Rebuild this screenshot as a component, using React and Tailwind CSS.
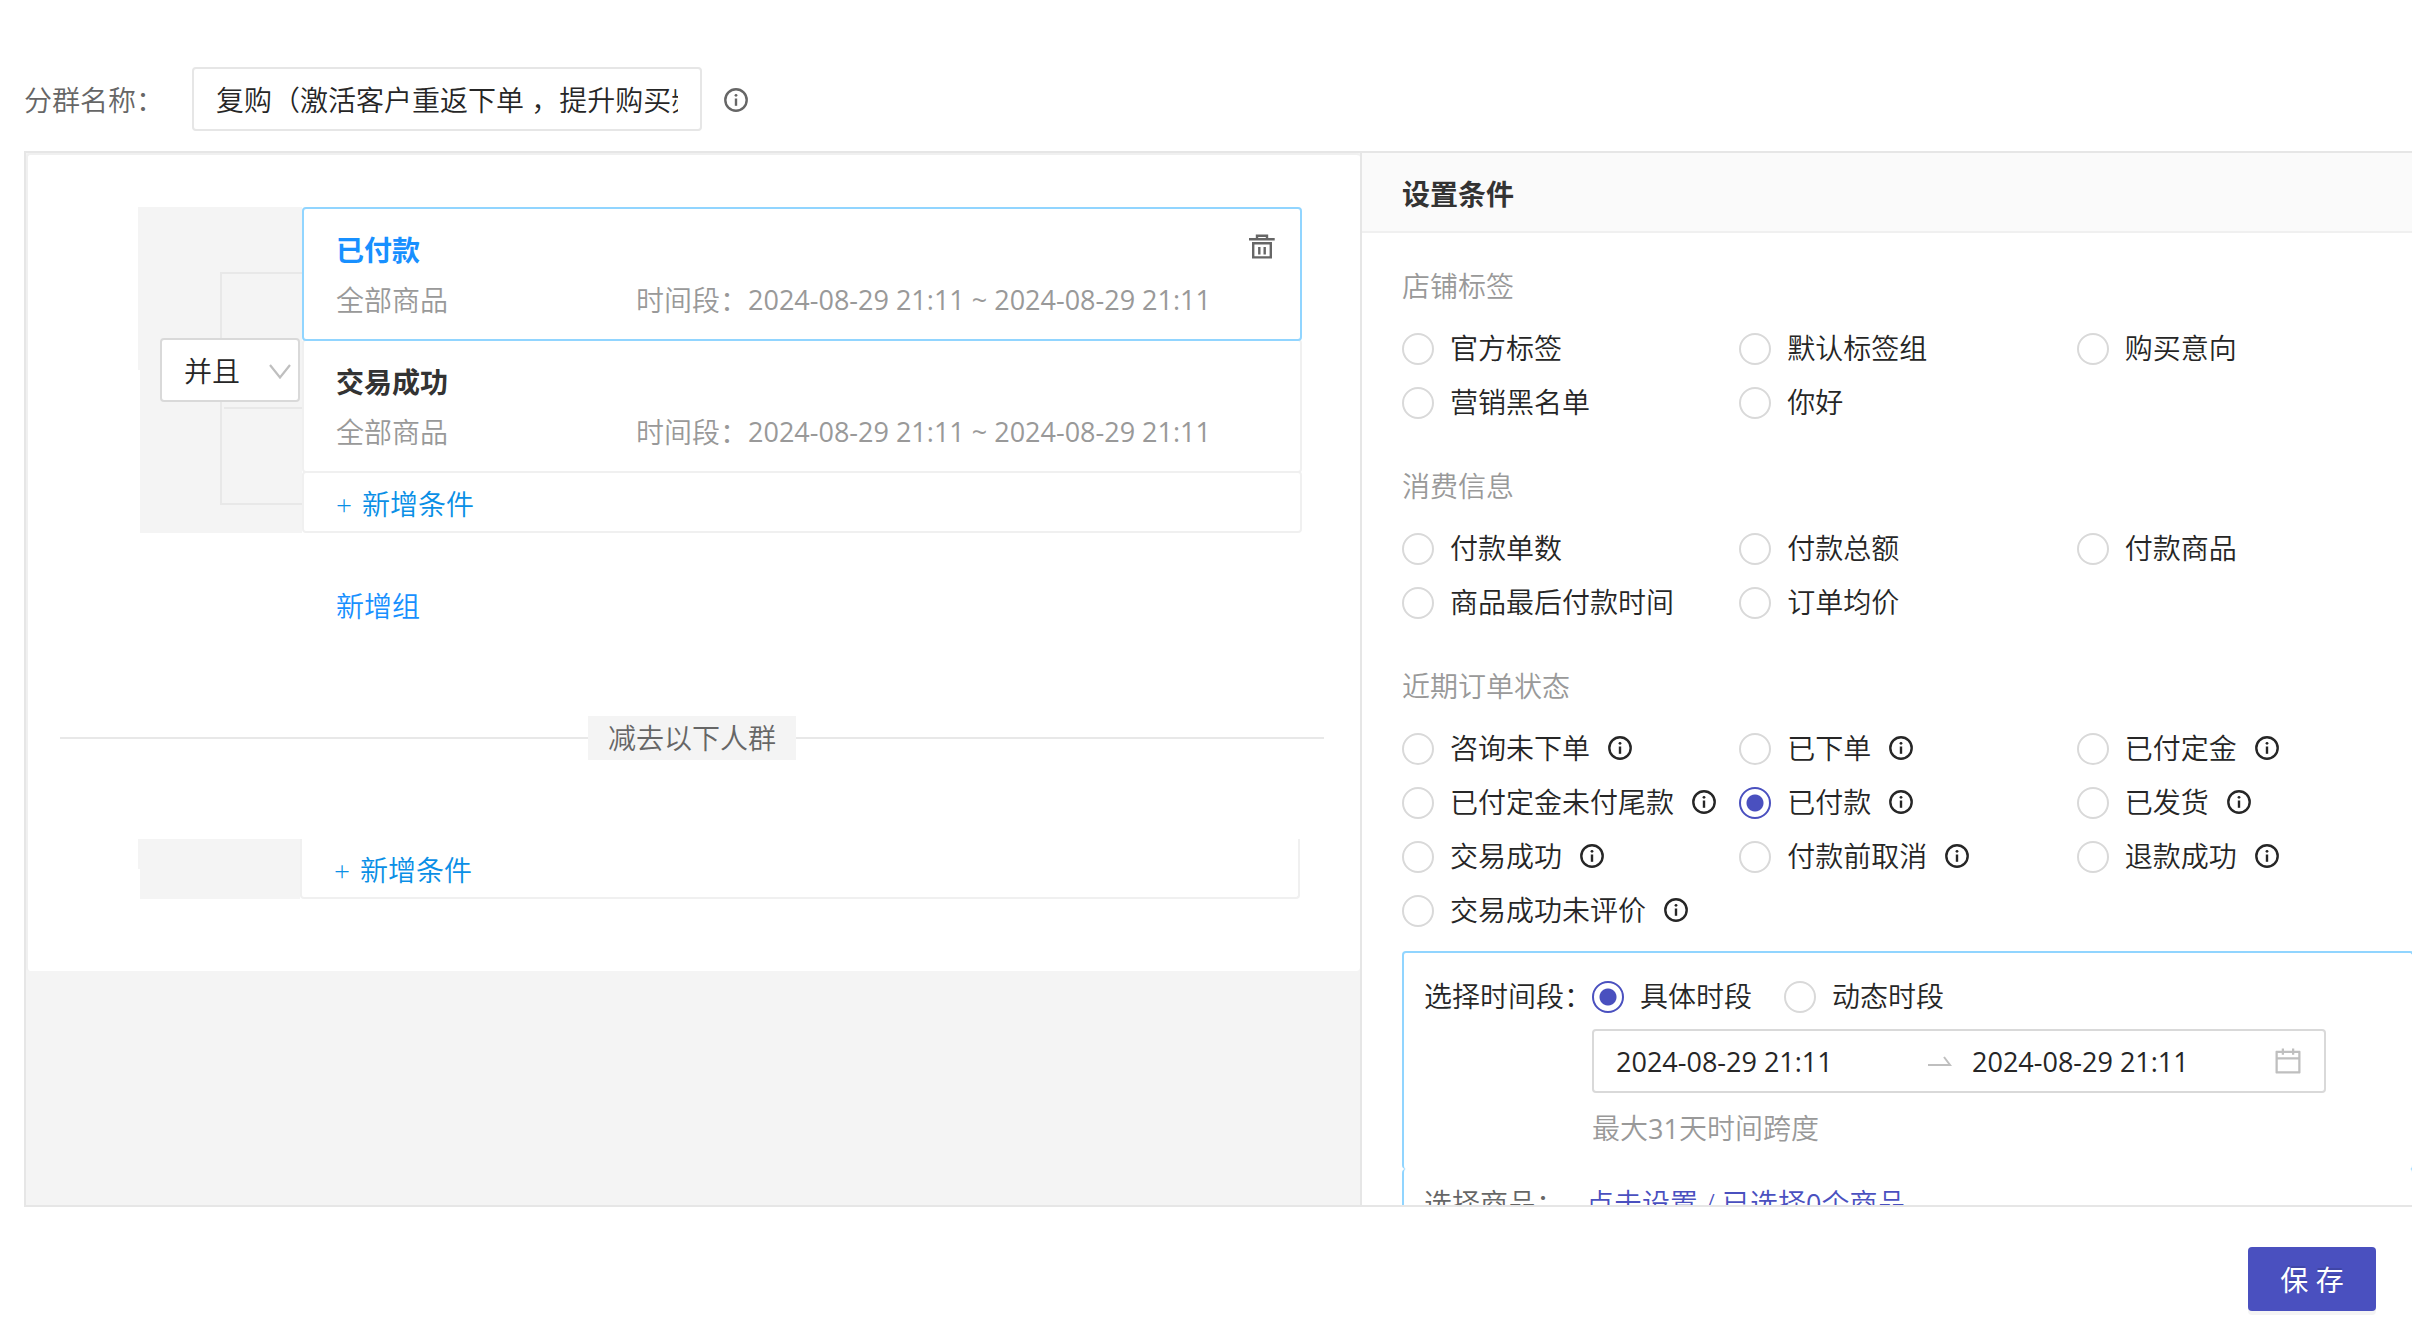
import React, { useState } from "react";

const shopTags = [
  { label: "官方标签" },
  { label: "默认标签组" },
  { label: "购买意向" },
  { label: "营销黑名单" },
  { label: "你好" },
];

const spendInfo = [
  { label: "付款单数" },
  { label: "付款总额" },
  { label: "付款商品" },
  { label: "商品最后付款时间" },
  { label: "订单均价" },
];

const orderStatus = [
  { label: "咨询未下单", tip: true },
  { label: "已下单", tip: true },
  { label: "已付定金", tip: true },
  { label: "已付定金未付尾款", tip: true },
  { label: "已付款", tip: true },
  { label: "已发货", tip: true },
  { label: "交易成功", tip: true },
  { label: "付款前取消", tip: true },
  { label: "退款成功", tip: true },
  { label: "交易成功未评价", tip: true },
];

const InfoIcon = ({ className = "" }) => (
  <svg
    viewBox="0 0 24 24"
    className={`size-6 shrink-0 ${className}`}
    fill="none"
    stroke="currentColor"
    strokeWidth="2.400"
    aria-hidden="true"
  >
    <circle cx="12" cy="12" r="10.700" />
    <path d="M12 10.500v7.300" />
    <circle cx="12" cy="7.300" r="1.400" fill="currentColor" stroke="none" />
  </svg>
);

const TrashIcon = () => (
  <svg
    viewBox="0 0 28 28"
    className="size-7"
    fill="none"
    stroke="currentColor"
    strokeWidth="2.400"
    aria-hidden="true"
  >
    <path d="M1 7.300h25.700M9 7V3.700h10V7M5.200 11.200v14.200h17.600V11.200zM11.300 15v7.500M16.700 15v7.500" />
  </svg>
);

const CalendarIcon = () => (
  <svg
    viewBox="64 64 896 896"
    className="size-7 shrink-0 text-[#bfbfbf]"
    fill="currentColor"
    aria-hidden="true"
  >
    <path d="M880 184H712v-64c0-4.400-3.600-8-8-8h-56c-4.400 0-8 3.600-8 8v64H384v-64c0-4.400-3.600-8-8-8h-56c-4.400 0-8 3.600-8 8v64H144c-17.700 0-32 14.300-32 32v664c0 17.700 14.300 32 32 32h736c17.700 0 32-14.300 32-32V216c0-17.700-14.300-32-32-32zm-40 656H184V460h656v380zM184 392V256h128v48c0 4.400 3.600 8 8 8h56c4.400 0 8-3.600 8-8v-48h256v48c0 4.400 3.600 8 8 8h56c4.400 0 8-3.600 8-8v-48h128v136H184z" />
  </svg>
);

const RadioItem = ({ name, label, tip, checked, onChange }) => (
  <label className="flex h-[54px] cursor-pointer items-center whitespace-nowrap">
    <input
      type="radio"
      name={name}
      checked={checked}
      onChange={onChange}
      className="size-8 shrink-0 cursor-pointer appearance-none rounded-full border-2 border-[#d9d9d9] bg-white checked:border-[#4a50bf] checked:bg-[radial-gradient(circle,#4a50bf_8px,#fff_9px)]"
    />
    <span className="flex items-center pb-0.5 pl-4">
      {label}
      {tip && <InfoIcon className="ml-[18px]" />}
    </span>
  </label>
);

const RadioSection = ({ title, items, value, onChange }) => (
  <section className="mb-[34px]">
    <h3 className="mb-[14px] leading-[44px] text-[#999]">{title}</h3>
    <div className="grid grid-cols-3">
      {items.map((item) => (
        <RadioItem
          key={item.label}
          name="condition"
          label={item.label}
          tip={item.tip}
          checked={value === item.label}
          onChange={() => onChange(item.label)}
        />
      ))}
    </div>
  </section>
);

const AddButton = () => (
  <button type="button" className="flex gap-2.5 text-[#0a8fe6]">
    <span>+</span>
    <span>新增条件</span>
  </button>
);

const ConditionCard = ({ title, range, active }) => (
  <div
    className={`flex items-start justify-between rounded border-2 pt-[19px] pr-6 pb-[17px] pl-8 ${
      active ? "relative border-[#91d5ff]" : "-mt-0.5 border-[#f0f0f0]"
    }`}
  >
    <div className="grow">
      <h3
        className={`leading-[44px] font-bold ${
          active ? "text-[#1890ff]" : "text-[#333]"
        }`}
      >
        {title}
      </h3>
      <div className="mt-1.5 flex leading-[44px] text-[#999]">
        <span className="w-[300px]">全部商品</span>
        <span>时间段：</span>
        <span className="text-[27px] font-normal">{range}</span>
      </div>
    </div>
    {active && (
      <button type="button" aria-label="删除" className="mt-1 text-[#666]">
        <TrashIcon />
      </button>
    )}
  </div>
);

// Grey strip on the left of a group, holds the and/or switch
const Gutter = ({ children, className }) => (
  <div className={`relative flex shrink-0 flex-col ${className}`}>
    <div className="flex-1 bg-[#f4f4f4]" />
    <div className="flex-1 border-l-2 border-white bg-[#f4f4f4]" />
    {children}
  </div>
);

const App = () => {
  const [name, setName] = useState("复购（激活客户重返下单 ，提升购买频次）");
  const [relation, setRelation] = useState("并且");
  const [condition, setCondition] = useState("已付款");
  const [period, setPeriod] = useState("具体时段");
  const [start, setStart] = useState("2024-08-29 21:11");
  const [end, setEnd] = useState("2024-08-29 21:11");

  const range = `${start} ~ ${end}`;

  return (
    <div className="flex h-screen flex-col overflow-hidden bg-white font-['Open_Sans','Noto_Sans_CJK_SC',sans-serif] text-[28px] leading-[44px] font-[350] text-[#262626]">
      {/* Segment name */}
      <header className="flex items-center pt-[67px] pb-5 pl-6">
        <label htmlFor="segment-name" className="w-[168px] pt-0.5 text-[#666]">
          分群名称：
        </label>
        <input
          id="segment-name"
          value={name}
          onChange={(e) => setName(e.target.value)}
          className="h-16 w-[510px] rounded border-2 border-[#e6e6e6] px-[22px] outline-none"
        />
        <InfoIcon className="mt-0.5 ml-[22px] text-[#666]" />
      </header>

      <main className="ml-6 flex min-h-0 flex-1 border-y-2 border-l-2 border-[#e6e6e6]">
        {/* Groups */}
        <div className="min-w-0 flex-1 bg-[#f4f4f4]">
          <div className="rounded border-t-2 border-l-2 border-[#f0f0f0] bg-white pb-[72px]">
            <div className="mt-[52px] mr-[58px] ml-[110px] flex">
              <Gutter className="w-[164px]">
                <div className="absolute top-[65px] right-0 bottom-7 left-[82px] border-2 border-r-0 border-[#e8e8e8]">
                  <div className="mt-[133px] ml-0.5 h-0.5 bg-[#e8e8e8]" />
                </div>
                <div className="absolute top-[131px] left-[22px]">
                  <select
                    aria-label="条件关系"
                    value={relation}
                    onChange={(e) => setRelation(e.target.value)}
                    className="h-16 w-[140px] appearance-none rounded border-2 border-[#d9d9d9] bg-white pt-0.5 pl-[22px] outline-none"
                  >
                    <option>并且</option>
                    <option>或者</option>
                  </select>
                  <svg
                    viewBox="0 0 22 16"
                    className="pointer-events-none absolute top-[25px] right-[9px] h-4 w-[22px] text-[#bfbfbf]"
                    fill="none"
                    stroke="currentColor"
                    strokeWidth="2.200"
                    aria-hidden="true"
                  >
                    <path d="M1 2l10 12.500L21 2" />
                  </svg>
                </div>
              </Gutter>
              <div className="grow">
                <ConditionCard title="已付款" range={range} active />
                <ConditionCard title="交易成功" range={range} />
                <div className="-mt-0.5 rounded border-2 border-[#f0f0f0] pt-[9px] pb-[5px] pl-8">
                  <AddButton />
                </div>
              </div>
            </div>

            <button
              type="button"
              className="mt-[51px] ml-[308px] block text-[#1890ff]"
            >
              新增组
            </button>

            <div className="mr-9 ml-8 mt-[88px] flex items-center">
              <div className="h-0.5 flex-1 bg-[#e8e8e8]" />
              <span className="bg-[#f4f4f4] px-5 text-[#666]">
                减去以下人群
              </span>
              <div className="h-0.5 flex-1 bg-[#e8e8e8]" />
            </div>

            <div className="mt-[79px] mr-[60px] ml-[110px] flex">
              <Gutter className="w-[162px]" />
              <div className="grow rounded-b border-2 border-t-0 border-[#f0f0f0] pt-[9px] pb-[5px] pl-8">
                <AddButton />
              </div>
            </div>
          </div>
        </div>

        {/* Condition settings */}
        <aside className="w-[1052px] shrink-0 overflow-hidden border-l-2 border-[#e6e6e6]">
          <div className="border-b-2 border-[#f0f0f0] bg-[#fafafa] pt-[19px] pb-[15px] pl-10">
            <h2 className="font-bold text-[#333]">设置条件</h2>
          </div>
          <div className="-mr-0.5 pt-[31px] pl-10">
            <RadioSection
              title="店铺标签"
              items={shopTags}
              value={condition}
              onChange={setCondition}
            />
            <RadioSection
              title="消费信息"
              items={spendInfo}
              value={condition}
              onChange={setCondition}
            />
            <RadioSection
              title="近期订单状态"
              items={orderStatus}
              value={condition}
              onChange={setCondition}
            />

            <div className="-mt-[21px] flex rounded border-2 border-b-0 border-[#91d5ff] pt-[17px] pb-[18px] pl-5">
              <span className="w-[168px] shrink-0 pt-1">选择时间段：</span>
              <div>
                <div className="flex gap-8">
                  {["具体时段", "动态时段"].map((item) => (
                    <RadioItem
                      key={item}
                      name="period"
                      label={item}
                      checked={period === item}
                      onChange={() => setPeriod(item)}
                    />
                  ))}
                </div>
                <div className="mt-[5px] flex h-16 w-[734px] items-center rounded border-2 border-[#d9d9d9] px-[22px]">
                  <input
                    aria-label="开始时间"
                    value={start}
                    onChange={(e) => setStart(e.target.value)}
                    className="w-[292px] pt-0.5 text-[27px] font-normal outline-none"
                  />
                  <svg
                    viewBox="0 0 24 12"
                    className="mx-5 h-3 w-6 shrink-0 text-[#bfbfbf]"
                    fill="none"
                    stroke="currentColor"
                    strokeWidth="2"
                    aria-hidden="true"
                  >
                    <path d="M0 10h22L16 2" />
                  </svg>
                  <input
                    aria-label="结束时间"
                    value={end}
                    onChange={(e) => setEnd(e.target.value)}
                    className="min-w-0 flex-1 pt-0.5 text-[27px] font-normal outline-none"
                  />
                  <CalendarIcon />
                </div>
                <p className="mt-[13px] text-[#999]">
                  最大<span className="text-[27px] font-normal">31</span>
                  天时间跨度
                </p>
              </div>
            </div>
            <div className="flex rounded border-2 border-t-0 border-[#91d5ff] py-3 pl-5">
              <span className="w-[162px] shrink-0 text-[#666]">选择商品：</span>
              <a href="#goods" className="text-[#4a50bf]">
                点击设置 / 已选择
                <span className="text-[27px] font-normal">0</span>个商品
              </a>
            </div>
          </div>
        </aside>
      </main>

      <footer className="flex justify-end pt-10 pr-9 pb-6">
        <button
          type="button"
          className="h-16 w-32 rounded bg-[#4a50bf] pt-0.5 font-normal text-white shadow-[0_4px_0_rgba(0,0,0,0.045)] text-shadow-[0_-2px_0_rgba(0,0,0,0.12)]"
        >
          保 存
        </button>
      </footer>
    </div>
  );
};

export default App;
